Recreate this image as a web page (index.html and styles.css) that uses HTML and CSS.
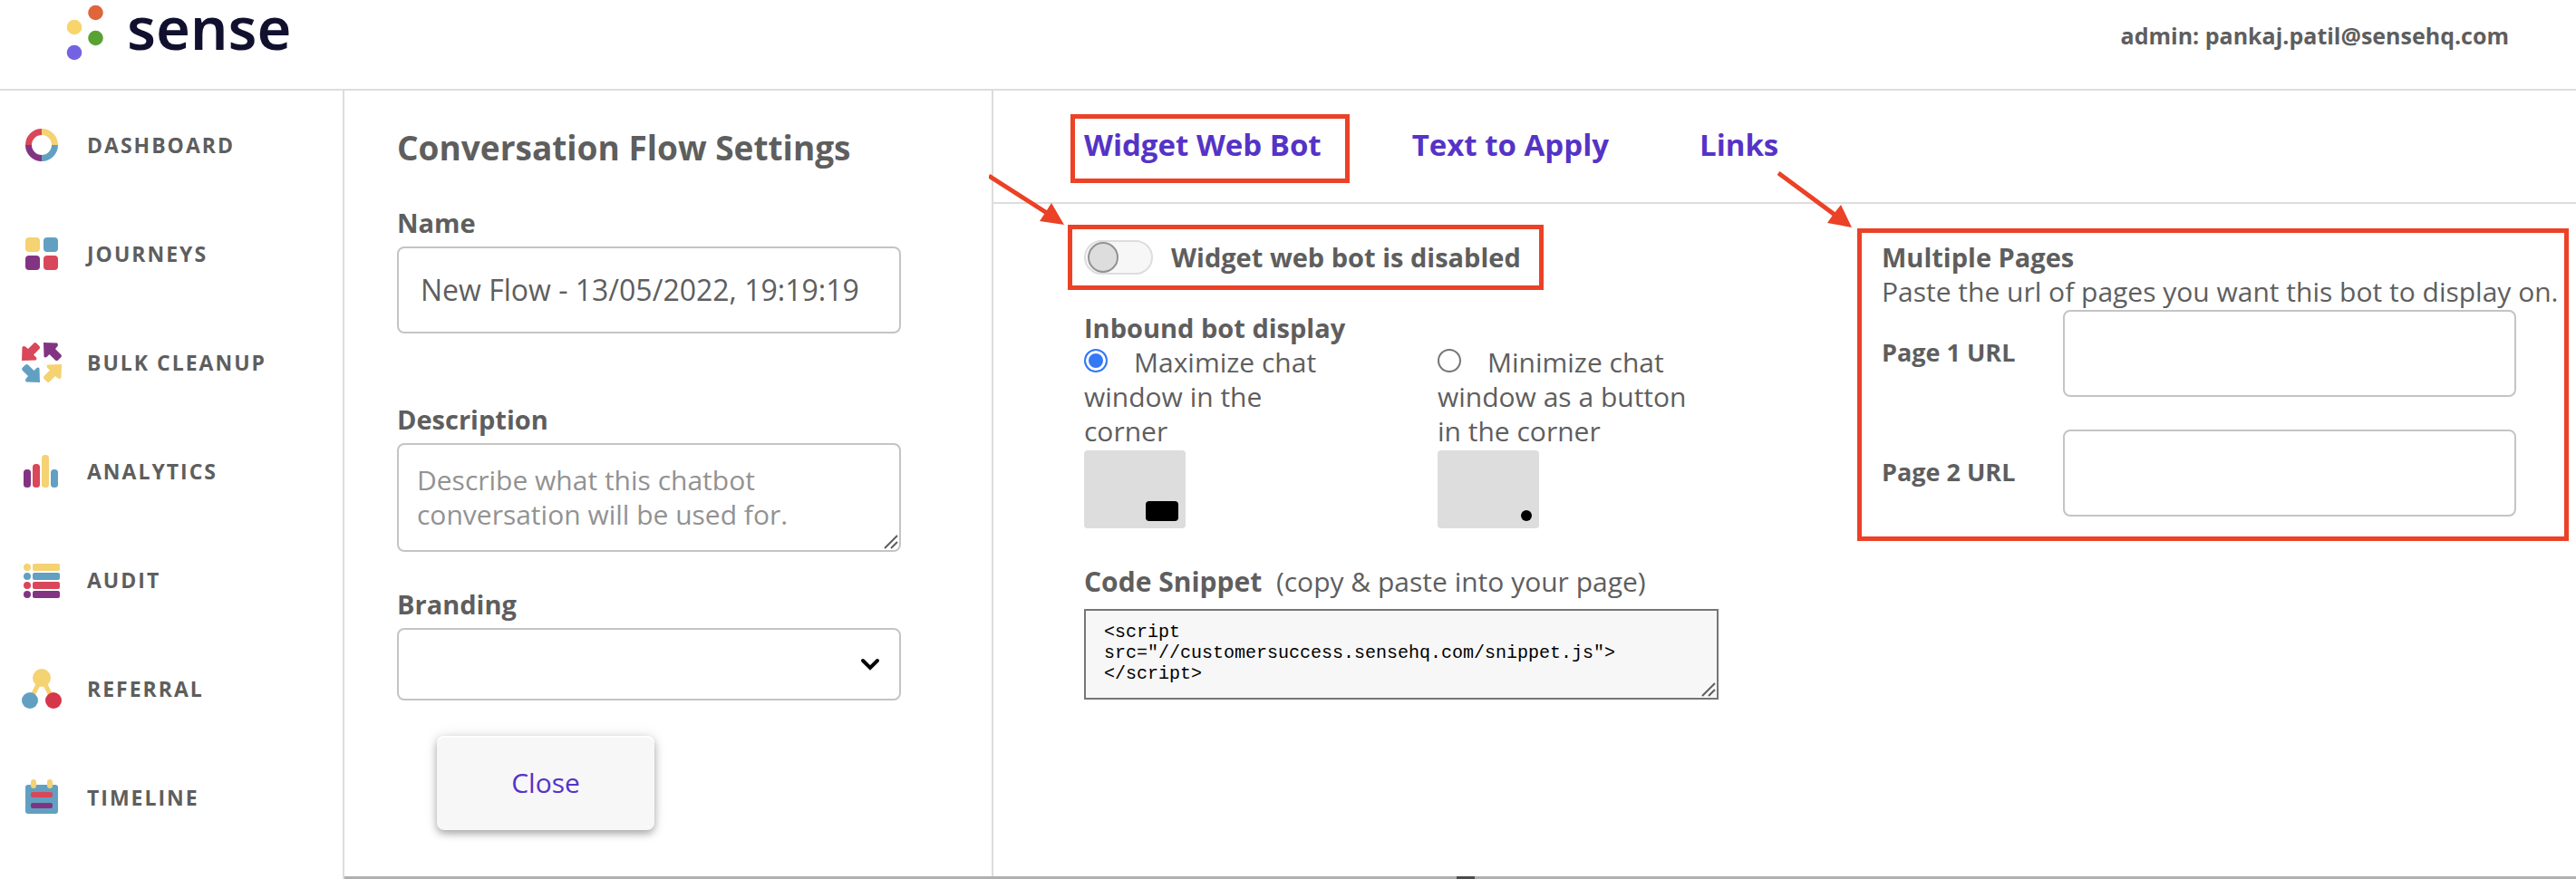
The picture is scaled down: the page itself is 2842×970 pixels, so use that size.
FILE: index.html
```
<!DOCTYPE html>
<html lang="en">
<head>
<meta charset="utf-8">
<title>Conversation Flow Settings</title>
<link rel="stylesheet" href="styles.css">
</head>
<body>
<div class="app">
  <header class="topbar">
    <a class="logo" href="#">
      <svg class="logo-dots" width="40" height="60" viewBox="0 0 40 60" aria-hidden="true">
        <circle cx="31.5" cy="8" r="8.3" fill="#e0653a"/>
        <circle cx="8" cy="24" r="8.3" fill="#f8d56b"/>
        <circle cx="31.5" cy="36" r="8.3" fill="#58a234"/>
        <circle cx="8" cy="52" r="8.3" fill="#7463e0"/>
      </svg>
      <span class="logo-name">sense</span>
    </a>
    <span class="account">admin: pankaj.patil@sensehq.com</span>
  </header>

  <nav class="sidebar">
    <a class="nav-item" href="#">
      <svg class="nav-icon" viewBox="0 0 44 44" fill="none" stroke-width="7" aria-hidden="true">
        <path d="M22 7.500A14.500 14.500 0 0 1 36.500 22" stroke="#f5d272"/>
        <path d="M36.500 22A14.500 14.500 0 0 1 22 36.500" stroke="#62a0c2"/>
        <path d="M22 36.500A14.500 14.500 0 0 1 7.500 22" stroke="#823482"/>
        <path d="M7.500 22A14.500 14.500 0 0 1 22 7.500" stroke="#d9475a"/>
      </svg>
      <span>DASHBOARD</span>
    </a>
    <a class="nav-item" href="#">
      <svg class="nav-icon" viewBox="0 0 44 44" aria-hidden="true">
        <rect x="4" y="4" width="16" height="16" rx="4" fill="#f5d272"/>
        <rect x="24" y="4" width="16" height="16" rx="4" fill="#62a0c2"/>
        <rect x="4" y="24" width="16" height="16" rx="4" fill="#823482"/>
        <rect x="24" y="24" width="16" height="16" rx="4" fill="#d9475a"/>
      </svg>
      <span>JOURNEYS</span>
    </a>
    <a class="nav-item" href="#">
      <svg class="nav-icon" viewBox="0 0 44 44" aria-hidden="true">
        <defs><path id="arrow" d="M0 20L0.500 5Q2 3.500 4 4.500L7 7L13.500 0.500Q15 -0.500 16.500 1L19.500 4Q20.500 5.500 19.500 7L13 13.500L16 16.500Q17 18.500 15.500 19.500Z"/></defs>
        <use href="#arrow" fill="#d9475a"/>
        <use href="#arrow" fill="#823482" transform="rotate(90 22 22)"/>
        <use href="#arrow" fill="#f5d272" transform="rotate(180 22 22)"/>
        <use href="#arrow" fill="#62a0c2" transform="rotate(270 22 22)"/>
      </svg>
      <span>BULK CLEANUP</span>
    </a>
    <a class="nav-item" href="#">
      <svg class="nav-icon" viewBox="0 0 44 44" aria-hidden="true">
        <rect x="2" y="20" width="8" height="20" rx="3.500" fill="#823482"/>
        <rect x="12" y="14" width="8" height="26" rx="3.500" fill="#d9475a"/>
        <rect x="22" y="4" width="8" height="36" rx="3.500" fill="#f5d272"/>
        <rect x="32" y="20" width="8" height="20" rx="3.500" fill="#62a0c2"/>
      </svg>
      <span>ANALYTICS</span>
    </a>
    <a class="nav-item" href="#">
      <svg class="nav-icon" viewBox="0 0 44 44" aria-hidden="true">
        <g fill="#f5d272"><circle cx="6" cy="8" r="4"/><rect x="12" y="4" width="30" height="8" rx="2"/></g>
        <g fill="#62a0c2"><circle cx="6" cy="18" r="4"/><rect x="12" y="14" width="30" height="8" rx="2"/></g>
        <g fill="#d9475a"><circle cx="6" cy="28" r="4"/><rect x="12" y="24" width="30" height="8" rx="2"/></g>
        <g fill="#823482"><circle cx="6" cy="38" r="4"/><rect x="12" y="34" width="30" height="8" rx="2"/></g>
      </svg>
      <span>AUDIT</span>
    </a>
    <a class="nav-item" href="#">
      <svg class="nav-icon" viewBox="0 0 44 44" aria-hidden="true">
        <path d="M9 35L22 10L35 35" fill="none" stroke="#f5d272" stroke-width="5"/>
        <circle cx="22" cy="10" r="10" fill="#f5d272"/>
        <circle cx="9" cy="35" r="9" fill="#62a0c2"/>
        <circle cx="35" cy="35" r="9" fill="#d63649"/>
      </svg>
      <span>REFERRAL</span>
    </a>
    <a class="nav-item" href="#">
      <svg class="nav-icon" viewBox="0 0 44 44" aria-hidden="true">
        <rect x="4" y="8" width="36" height="32" rx="3" fill="#62a0c2"/>
        <rect x="10" y="2" width="6" height="10" rx="3" fill="#f5d272"/>
        <rect x="28" y="2" width="6" height="10" rx="3" fill="#f5d272"/>
        <rect x="10" y="16" width="24" height="6" rx="2" fill="#d9475a"/>
        <rect x="10" y="28" width="24" height="6" rx="2" fill="#823482"/>
      </svg>
      <span>TIMELINE</span>
    </a>
  </nav>

  <main class="workspace">
    <form class="settings">
      <h1 class="settings-title">Conversation Flow Settings</h1>
      <div class="field field-name">
        <label for="flow-name">Name</label>
        <input class="text-box" id="flow-name" type="text" value="New Flow - 13/05/2022, 19:19:19">
      </div>
      <div class="field">
        <label for="flow-description">Description</label>
        <div class="area-wrap">
          <textarea class="text-area" id="flow-description" placeholder="Describe what this chatbot conversation will be used for."></textarea>
          <svg class="grip" width="16" height="16" viewBox="0 0 16 16" aria-hidden="true"><path d="M1 15L15 1M8 15L15 8" stroke="#5e5e5e" stroke-width="2"/></svg>
        </div>
      </div>
      <div class="field">
        <label for="flow-branding">Branding</label>
        <div class="select-wrap">
          <select class="select-box" id="flow-branding"><option></option></select>
          <svg class="chevron" width="22" height="16" viewBox="0 0 22 16" aria-hidden="true"><path d="M3 4L11 12L19 4" fill="none" stroke="#000" stroke-width="4" stroke-linecap="round"/></svg>
        </div>
      </div>
      <button class="close-button" type="button">Close</button>
    </form>

    <section class="channel">
      <nav class="tabs">
        <a class="tab callout callout-tab" href="#">Widget Web Bot</a>
        <a class="tab" href="#">Text to Apply</a>
        <a class="tab" href="#">Links</a>
      </nav>
      <div class="channel-body">
        <div class="widget">
          <label class="toggle callout callout-toggle">
            <input class="toggle-input" type="checkbox">
            <span>Widget web bot is disabled</span>
          </label>
          <fieldset class="display">
            <legend>Inbound bot display</legend>
            <div class="options">
              <div class="option">
                <label><input class="radio" type="radio" name="display" checked>Maximize chat window in the corner</label>
                <div class="preview"><span class="preview-window"></span></div>
              </div>
              <div class="option">
                <label><input class="radio" type="radio" name="display">Minimize chat window as a button in the corner</label>
                <div class="preview"><span class="preview-button"></span></div>
              </div>
            </div>
          </fieldset>
          <div class="snippet">
            <label for="snippet"><strong>Code Snippet</strong>&nbsp; (copy &amp; paste into your page)</label>
            <div class="area-wrap">
              <textarea class="snippet-box" id="snippet" readonly>&lt;script
src="//customersuccess.sensehq.com/snippet.js"&gt;
&lt;/script&gt;</textarea>
              <svg class="grip" width="16" height="16" viewBox="0 0 16 16" aria-hidden="true"><path d="M1 15L15 1M8 15L15 8" stroke="#5e5e5e" stroke-width="2"/></svg>
            </div>
          </div>
        </div>
        <div class="pages callout callout-pages">
          <h2>Multiple Pages</h2>
          <p>Paste the url of pages you want this bot to display on.</p>
          <div class="page-list">
            <label class="page-label" for="page-1">Page 1 URL</label>
            <input class="text-box" id="page-1" type="text">
            <label class="page-label" for="page-2">Page 2 URL</label>
            <input class="text-box" id="page-2" type="text">
          </div>
          <svg class="pointer pointer-pages" width="84" height="64" viewBox="0 0 84 64" aria-hidden="true">
            <path d="M1 2L66 50" stroke="#eb4126" stroke-width="5"/>
            <path d="M82 62L55 57L62 47L70 37Z" fill="#eb4126"/>
          </svg>
        </div>
      </div>
      <svg class="pointer pointer-toggle" width="84" height="58" viewBox="0 0 84 58" aria-hidden="true">
        <path d="M0 3L64 44" stroke="#eb4126" stroke-width="5"/>
        <path d="M83 57L56 53L62 44L69 33Z" fill="#eb4126"/>
      </svg>
    </section>
  </main>
</div>
</body>
</html>
```
FILE: styles.css
```
* {
  box-sizing: border-box;
}

body {
  margin: 0;
  background: #fff;
  color: #5e5e5e;
  font-family: "Open Sans", "Liberation Sans", sans-serif;
  font-size: 30px;
  line-height: 38px;
}

a {
  color: inherit;
  text-decoration: none;
}

h1, h2, p {
  margin: 0;
}

input, select, textarea, button {
  margin: 0;
  color: inherit;
  font: inherit;
}

.app {
  display: grid;
  grid-template: auto 1fr / 380px 1fr;
  min-height: 100vh;
}

/* Top bar */
.topbar {
  grid-column: 1 / -1;
  display: flex;
  align-items: flex-start;
  justify-content: space-between;
  height: 100px;
  padding: 0 74px;
  border-bottom: 2px solid #ddd;
}

.logo {
  display: flex;
  gap: 26px;
}

.logo-dots {
  margin-top: 6px;
  overflow: visible;
}

.logo-name {
  color: #11112f;
  font: 600 65px/60px "Noto Sans", sans-serif;
}

.account {
  margin-top: 20px;
  font-size: 25px;
  font-weight: 700;
}

/* Sidebar */
.sidebar {
  border-right: 2px solid #ddd;
}

.nav-item {
  display: flex;
  align-items: center;
  gap: 28px;
  height: 120px;
  padding-left: 24px;
  font-size: 23px;
  font-weight: 700;
  letter-spacing: 2px;
}

.nav-icon {
  width: 44px;
  height: 44px;
}

/* Workspace */
.workspace {
  position: relative;
  display: grid;
  grid-template-columns: 716px minmax(0, 1fr);
  border-bottom: 3px solid #b0b0b0;
}

.workspace::after {
  content: "";
  position: absolute;
  bottom: -3px;
  left: 50%;
  width: 20px;
  height: 3px;
  margin-left: -4px;
  background: #4c4c4c;
}

.settings {
  padding: 40px 100px 40px 58px;
  border-right: 2px solid #ddd;
}

.settings-title {
  margin-bottom: 41px;
  font-size: 37px;
  line-height: 46px;
}

.field {
  display: flex;
  flex-direction: column;
  gap: 7px;
  margin-bottom: 39px;
}

.field-name {
  margin-bottom: 76px;
}

.field > label {
  font-size: 29px;
  font-weight: 700;
}

.text-box,
.text-area,
.select-box {
  display: block;
  width: 100%;
  border: 2px solid #c4c4c4;
  border-radius: 8px;
  background: #fff;
}

.text-box {
  height: 96px;
  padding: 0 24px 2px;
  font-size: 32px;
}

.area-wrap {
  position: relative;
}

.text-area {
  height: 120px;
  padding: 20px;
  resize: none;
}

.text-area::placeholder {
  color: #929292;
}

.grip {
  position: absolute;
  right: 3px;
  bottom: 3px;
  pointer-events: none;
}

.select-wrap {
  position: relative;
}

.select-box {
  height: 80px;
  padding: 0 24px;
  appearance: none;
}

.chevron {
  position: absolute;
  top: 32px;
  right: 23px;
  pointer-events: none;
}

.close-button {
  display: block;
  width: 240px;
  height: 104px;
  margin-left: 44px;
  border: 0;
  border-radius: 8px;
  background: #f7f7f7;
  box-shadow: 0 4px 8px rgba(0, 0, 0, 0.3), 0 0 16px rgba(0, 0, 0, 0.1), inset 0 2px 0 #fff;
  color: #5533c7;
}

/* Channel */
.channel {
  position: relative;
}

.tabs {
  display: flex;
  gap: 100px;
  padding: 40px 100px 43px;
  border-bottom: 2px solid #ddd;
}

.tab {
  color: #5533c7;
  font-size: 33px;
  font-weight: 700;
  line-height: 40px;
}

.channel-body {
  display: grid;
  grid-template-columns: repeat(2, minmax(0, 1fr));
  gap: 180px;
  padding: 40px 66px 40px 100px;
}

.toggle {
  display: flex;
  align-items: center;
  gap: 20px;
  width: fit-content;
  font-size: 29px;
  font-weight: 700;
}

.toggle-input {
  display: flex;
  align-items: center;
  width: 76px;
  height: 38px;
  padding: 0 2px;
  border: 2px solid #ddd;
  border-radius: 19px;
  background: #f7f7f7;
  appearance: none;
}

.toggle-input::before {
  content: "";
  width: 30px;
  height: 30px;
  border: 2px solid #929292;
  border-radius: 50%;
  background: #ddd;
}

.display {
  min-width: 0;
  margin: 40px 0;
  padding: 0;
  border: 0;
}

.display legend {
  padding: 0;
  font-size: 29px;
  font-weight: 700;
}

.options {
  display: grid;
  grid-template-columns: 280px 280px;
  gap: 110px;
}

.radio {
  width: 26px;
  height: 26px;
  margin-right: 29px;
  border: 2px solid #767676;
  border-radius: 50%;
  background: #fff;
  appearance: none;
}

.radio:checked {
  border-color: #3478f6;
  background: #3478f6;
  box-shadow: inset 0 0 0 3px #fff;
}

.preview {
  display: flex;
  align-items: flex-end;
  justify-content: flex-end;
  width: 112px;
  height: 86px;
  margin-top: 2px;
  padding: 8px;
  border-radius: 4px;
  background: #ddd;
}

.preview-window {
  width: 36px;
  height: 22px;
  border-radius: 4px;
  background: #000;
}

.preview-button {
  width: 12px;
  height: 12px;
  border-radius: 50%;
  background: #000;
}

.snippet {
  display: flex;
  flex-direction: column;
  gap: 11px;
}

.snippet-box {
  display: block;
  width: 100%;
  height: 100px;
  padding: 12px 20px;
  border: 2px solid #767676;
  background: #f7f7f7;
  color: #000;
  font: 20px/23px "Liberation Mono", monospace;
  resize: none;
}

.pages {
  align-self: start;
}

.pages h2 {
  font-size: 29px;
}

.pages p {
  margin-bottom: 1px;
  white-space: nowrap;
}

.page-list {
  display: grid;
  grid-template-columns: 200px 1fr;
  align-items: center;
  row-gap: 36px;
}

.page-label {
  padding-bottom: 2px;
  font-size: 27px;
  font-weight: 700;
}

/* Callouts */
.callout {
  position: relative;
}

.callout::after {
  content: "";
  position: absolute;
  border: 5px solid #eb4126;
  pointer-events: none;
}

.callout-tab::after {
  inset: -14px -31px -22px -15px;
}

.callout-toggle::after {
  inset: -17px -25px -17px -18px;
}

.callout-pages::after {
  inset: -13px -58px -27px -27px;
}

.pointer {
  position: absolute;
  pointer-events: none;
}

.pointer-toggle {
  top: 91px;
  left: -5px;
}

.pointer-pages {
  top: -76px;
  left: -115px;
}
```
